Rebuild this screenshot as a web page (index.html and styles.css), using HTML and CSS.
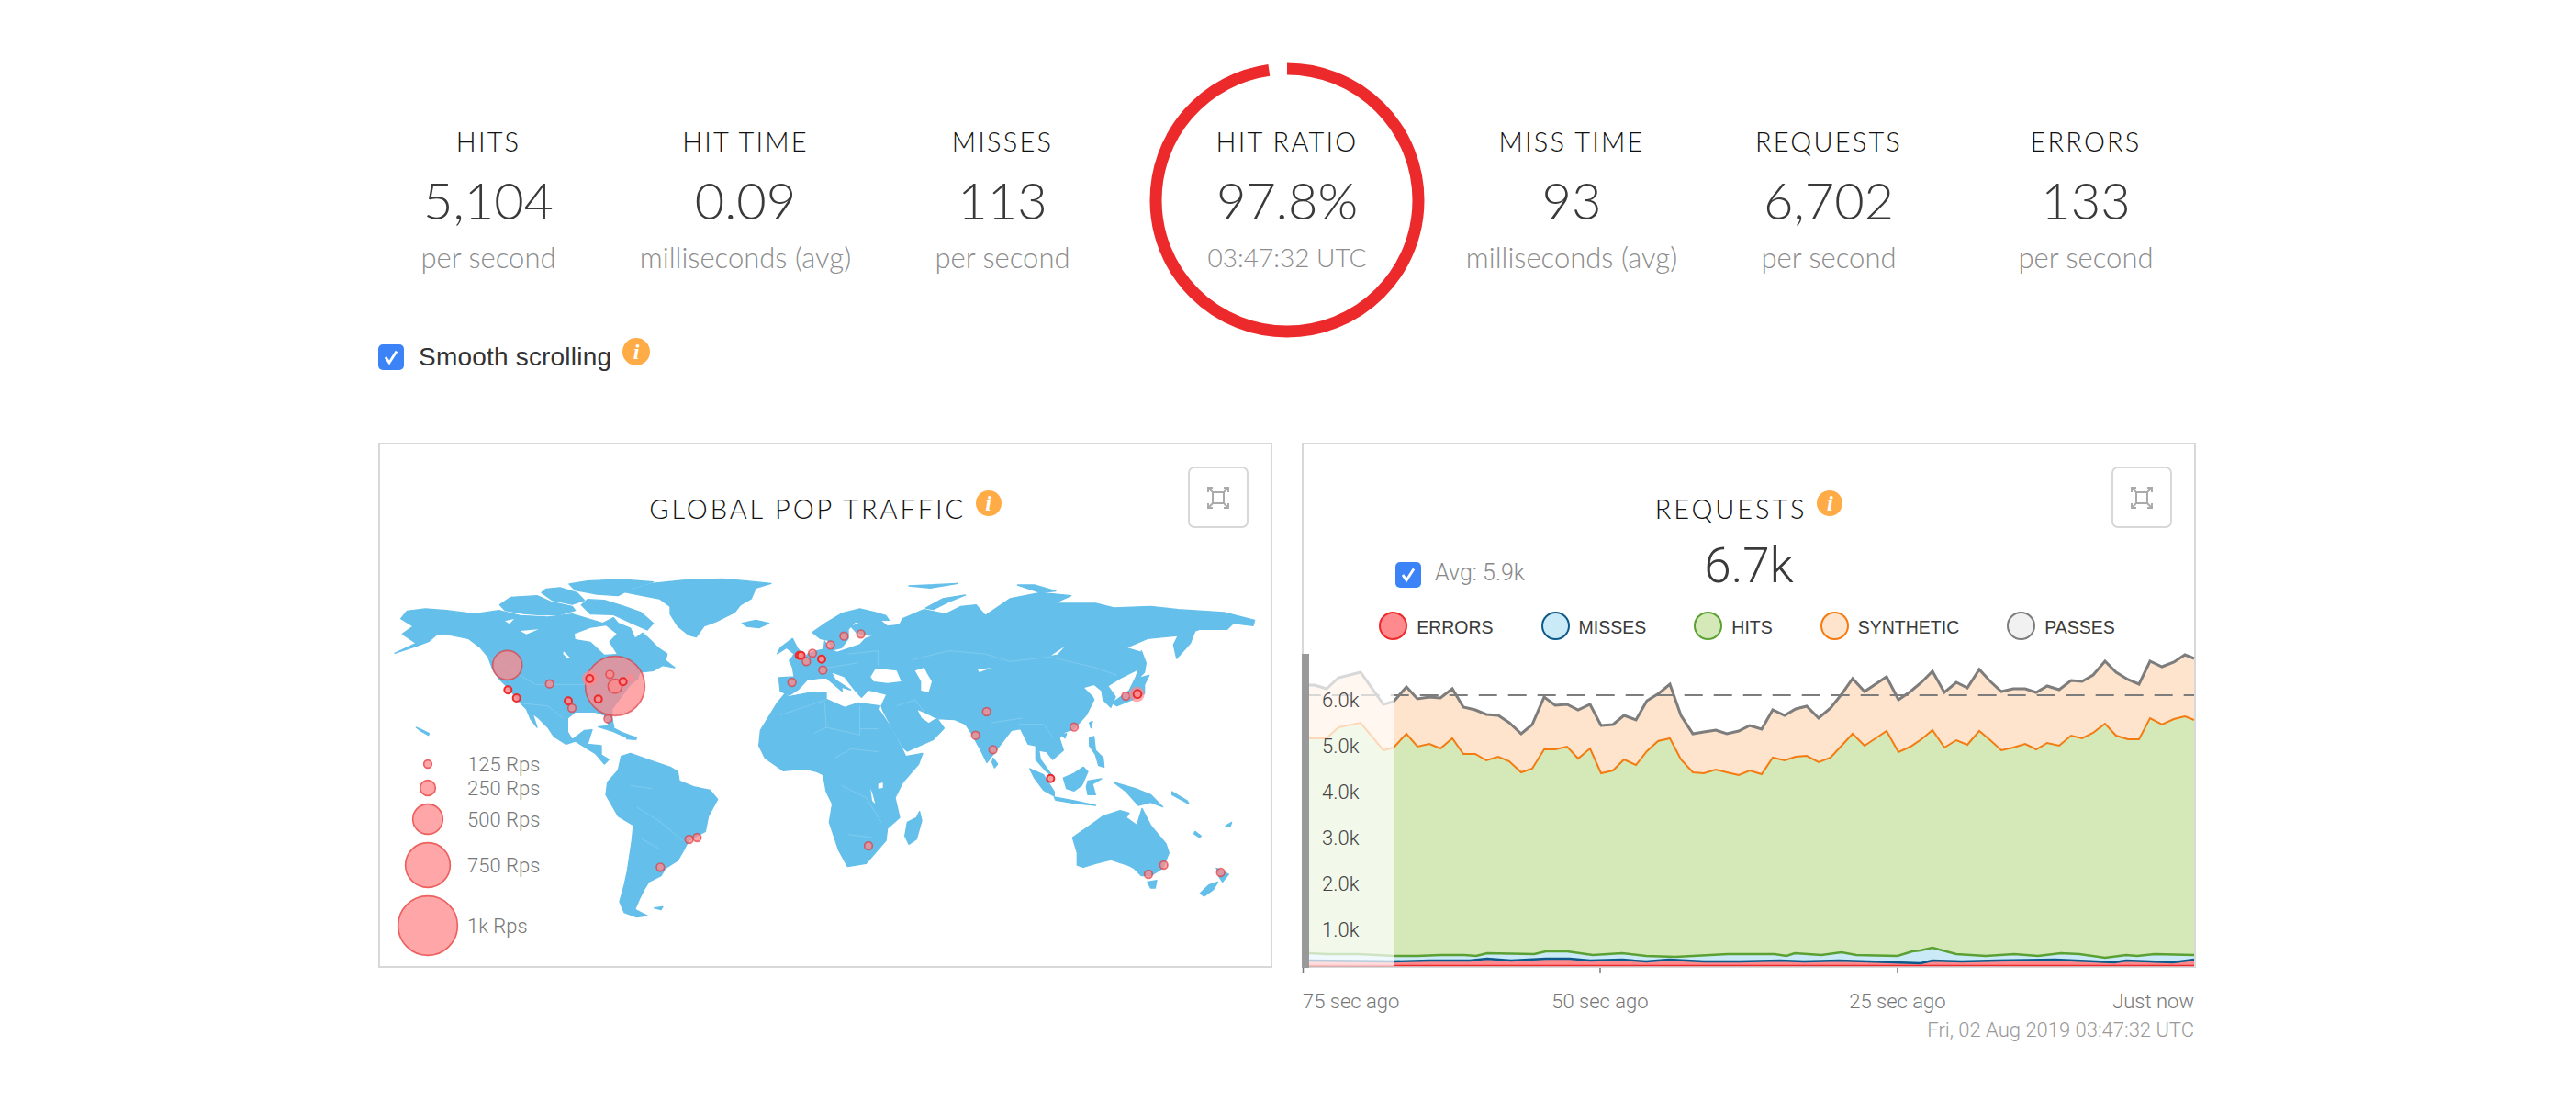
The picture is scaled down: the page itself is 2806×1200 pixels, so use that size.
FILE: index.html
```html
<!DOCTYPE html>
<html>
<head>
	<title>Real-time stats</title>
	<link rel="stylesheet" href="styles.css">
</head>
<body>
<div class="page">

	<!-- top numbers -->
	<div class="stats">
		<div class="stat">
			<div class="stat-label">HITS</div>
			<div class="stat-value">5,104</div>
			<div class="stat-sub">per second</div>
		</div>
		<div class="stat">
			<div class="stat-label">HIT TIME</div>
			<div class="stat-value">0.09</div>
			<div class="stat-sub">milliseconds (avg)</div>
		</div>
		<div class="stat">
			<div class="stat-label">MISSES</div>
			<div class="stat-value">113</div>
			<div class="stat-sub">per second</div>
		</div>
		<div class="stat stat-ring">
			<svg class="ring" width="300" height="300" viewBox="0 0 300 300">
				<circle class="ring-arc" cx="150" cy="150" r="143" pathLength="100" stroke-dasharray="97.8 2.2" transform="rotate(-90 150 150)"></circle>
			</svg>
			<div class="stat-label">HIT RATIO</div>
			<div class="stat-value">97.8%</div>
			<div class="stat-sub">03:47:32 UTC</div>
		</div>
		<div class="stat">
			<div class="stat-label">MISS TIME</div>
			<div class="stat-value">93</div>
			<div class="stat-sub">milliseconds (avg)</div>
		</div>
		<div class="stat">
			<div class="stat-label">REQUESTS</div>
			<div class="stat-value">6,702</div>
			<div class="stat-sub">per second</div>
		</div>
		<div class="stat">
			<div class="stat-label">ERRORS</div>
			<div class="stat-value">133</div>
			<div class="stat-sub">per second</div>
		</div>
	</div>

	<div class="smooth">
		<span class="check"><svg width="18" height="18" viewBox="0 0 18 18"><path d="M3 9 L7 15 L15 2.5" fill="none" stroke="#fff" stroke-width="2.8"/></svg></span>
		<span class="smooth-text">Smooth scrolling</span>
		<span class="info info-top">i</span>
	</div>

	<div class="cards">

		<!-- map card -->
		<div class="card">
			<div class="card-title">GLOBAL POP TRAFFIC <span class="info">i</span></div>
			<button class="expand">
				<svg width="24" height="24" viewBox="0 0 24 24" fill="none" stroke="#aaa" stroke-width="2">
					<rect x="6" y="6" width="12" height="12"/>
					<path d="M1 6V1H6M18 1H23V6M23 18V23H18M6 23H1V18M1 1L6 6M23 1L18 6M23 23L18 18M1 23L6 18"/>
				</svg>
			</button>
			<svg class="map" width="970" height="432" viewBox="12 420 2910 1296">
				<!-- north america -->
				<path class="land" d="M100 550L160 543L230 548L320 560L400 548L470 565L560 570L640 560L700 578L740 590L775 572L790 590L830 606L845 640L870 622L890 640L920 670L950 690L945 712L975 735L935 728L905 745L860 750L855 770L830 790L800 830L770 870L770 900L776 930L760 925L745 890L715 880L690 880L650 880L625 900L625 945L640 970L680 940L705 938L690 985L735 990L735 1020L760 1035L745 1050L715 1015L690 1000L650 975L620 985L580 960L560 930L530 900L510 885L525 930L505 905L490 870L470 850L430 800L400 770L380 740L365 700L340 670L300 640L240 628L200 625L170 650L130 665L60 688L130 655L85 625L120 600L80 575Z"/>
				<path class="land" d="M403 530L440 505L525 500L570 520L640 535L650 548L600 562L540 563L480 558L420 548Z"/>
				<path class="land" d="M670 530L690 512L745 515L810 535L865 555L905 590L885 612L835 590L775 562L700 560Z"/>
				<path class="land" d="M555 478L600 474L655 490L680 515L640 528L575 515L540 490Z"/>
				<path class="land" d="M630 462L690 452L800 447L905 455L830 478L790 500L720 495L650 482Z"/>
				<path class="land" d="M810 488L900 460L1000 450L1130 445L1210 452L1290 460L1240 475L1225 510L1190 530L1170 555L1110 585L1070 600L1045 635L1020 628L985 600L960 560L960 535L925 510L870 500Z"/>
				<path class="land" d="M1195 590L1240 580L1283 590L1250 605L1210 600Z"/>
				<path class="sea" d="M648 625L700 605L750 598L785 625L760 650L785 690L745 692L700 650L650 642Z"/>
				<path class="sea" d="M612 682L632 702L625 706L610 690Z"/>
				<path class="sea" d="M470 615L530 610L490 626Z"/>
				<path class="sea" d="M420 583L450 576L435 592Z"/>
				<path class="land" d="M725 928L760 925L800 945L850 965L810 960L770 942Z"/>
				<path class="land" d="M815 958L850 962L848 970L818 968Z"/>
				<path class="land" d="M130 930L145 936L172 950L170 956L145 942Z"/>

				<!-- south america -->
				<path class="land" d="M755 1110L790 1070L800 1025L830 1015L900 1040L960 1060L985 1075L990 1105L1040 1125L1090 1135L1115 1165L1085 1220L1075 1270L1020 1300L1005 1330L985 1365L945 1390L930 1415L890 1435L875 1460L860 1490L845 1525L885 1545L850 1550L810 1535L795 1500L810 1445L820 1400L835 1300L840 1250L790 1220L750 1150Z"/>
				<path class="land" d="M908 1520L936 1516L930 1526Z"/>

				<!-- eurasia -->
				<path class="land" d="M1320 812L1315 768L1365 765L1360 735L1350 710L1395 712L1410 690L1440 680L1462 675L1465 648L1477 672L1505 685L1550 670L1580 660L1598 640L1625 632L1570 622L1552 602L1582 587L1565 585L1542 610L1542 640L1520 670L1492 677L1475 645L1450 640L1425 620L1470 588L1520 558L1580 543L1630 555L1665 565L1675 580L1645 580L1670 600L1710 595L1720 575L1790 545L1860 560L1910 535L1960 530L1990 565L2070 510L2170 490L2270 500L2215 525L2350 525L2410 540L2530 535L2620 545L2770 555L2870 580L2865 598L2800 590L2780 610L2690 610L2675 615L2660 655L2615 705L2605 660L2620 630L2520 640L2450 670L2500 685L2490 740L2430 770L2390 795L2415 830L2400 865L2375 840L2370 810L2345 790L2310 800L2340 830L2345 840L2320 890L2280 935L2250 945L2232 965L2245 1005L2210 1035L2190 1010L2165 1005L2170 1035L2210 1090L2185 1070L2155 1035L2155 990L2130 985L2105 935L2075 940L2025 1005L1995 1045L1975 1005L1945 950L1925 920L1890 905L1835 902L1800 885L1765 870L1780 900L1805 918L1825 905L1835 905L1855 933L1820 970L1735 1008L1720 995L1690 940L1655 875L1650 860L1668 822L1608 808L1585 832L1565 810L1530 765L1485 748L1500 775L1550 808L1520 798L1522 812L1470 768L1445 770L1408 775L1380 805L1350 825Z"/>
				<path class="land" d="M1360 640L1375 670L1400 700L1350 715L1365 690L1340 670L1310 690L1320 670Z"/>
				<path class="land" d="M2500 680L2515 720L2510 750L2490 770L2525 760L2510 790L2510 820L2470 840L2420 860L2405 850L2460 810L2480 770L2495 730Z"/>
				<path class="land" d="M1740 468L1900 460L1810 475Z"/>
				<path class="land" d="M2095 465L2150 465L2220 485L2170 490Z"/>
				<path class="land" d="M1795 540L1850 510L1925 498L1870 520L1820 545Z"/>
				<path class="sea" d="M1615 765L1630 740L1660 740L1700 745L1715 780L1670 785L1625 780Z"/>
				<path class="sea" d="M1760 745L1790 735L1800 755L1815 780L1805 815L1780 810L1780 780Z"/>
				<path class="sea" d="M1965 740L2010 736L1970 750Z"/>
				<path class="sea" d="M2205 695L2250 665L2225 692Z"/>

				<!-- africa -->
				<path class="land" d="M1335 820L1348 830L1410 818L1470 815L1470 838L1530 865L1575 850L1645 860L1642 872L1680 928L1722 1008L1730 1025L1785 1015L1772 1050L1720 1110L1695 1160L1710 1225L1670 1260L1665 1300L1600 1375L1540 1385L1510 1330L1480 1240L1490 1180L1470 1140L1460 1085L1440 1075L1400 1065L1330 1072L1270 1030L1250 990L1255 940L1310 850Z"/>
				<path class="land" d="M1775 1205L1782 1235L1765 1295L1740 1312L1727 1285L1735 1240L1765 1225Z"/>
				<path class="sea" d="M1615 1130L1622 1150L1630 1180L1620 1170Z"/>
				<path class="sea" d="M1640 1115L1655 1110L1655 1128L1640 1130Z"/>

				<!-- asia pacific and australia -->
				<path class="land" d="M2240 955L2255 950L2250 965Z"/>
				<path class="land" d="M2330 915L2340 910L2335 932Z"/>
				<path class="land" d="M2015 1030L2030 1050L2020 1062L2012 1045Z"/>
				<path class="land" d="M2135 1065L2180 1085L2215 1140L2215 1155L2180 1135L2150 1095Z"/>
				<path class="land" d="M2215 1158L2280 1170L2350 1185L2280 1178L2220 1168Z"/>
				<path class="land" d="M2245 1095L2280 1080L2310 1060L2325 1075L2305 1120L2280 1138L2255 1130Z"/>
				<path class="land" d="M2325 1105L2370 1098L2340 1115L2350 1150L2325 1150L2320 1125Z"/>
				<path class="land" d="M2330 965L2345 960L2350 1005L2375 1030L2378 1060L2360 1055L2350 1020L2330 990Z"/>
				<path class="land" d="M2410 1110L2480 1130L2530 1150L2570 1190L2530 1175L2490 1185L2450 1140Z"/>
				<path class="land" d="M2275 1290L2340 1245L2375 1220L2430 1202L2460 1210L2450 1225L2485 1250L2502 1195L2530 1250L2580 1310L2590 1340L2570 1390L2530 1415L2500 1415L2475 1390L2455 1380L2400 1362L2350 1375L2310 1387L2290 1380L2290 1340Z"/>
				<path class="land" d="M2520 1435L2550 1430L2545 1455L2530 1455Z"/>
				<path class="land" d="M2745 1390L2785 1410L2765 1435L2755 1420Z"/>
				<path class="land" d="M2750 1435L2735 1460L2705 1482L2692 1472L2720 1445Z"/>
				<path class="land" d="M2675 1270L2695 1285L2690 1290L2672 1278Z"/>
				<path class="land" d="M2775 1252L2795 1240L2790 1255Z"/>
				<path class="land" d="M2600 1140L2650 1170L2655 1180L2600 1150Z"/>

				<!-- a few borders -->
				<path class="border" d="M365 700L520 790L700 790M460 850L560 860L610 900M850 1190L930 1240L1000 1300M830 1120L900 1130M860 1290L930 1330M1320 890L1470 840M1465 850L1470 930L1580 955L1580 860M1580 935L1640 935M1430 950L1470 930M1640 1010L1550 1000L1500 1030M1520 1120L1600 1160L1650 1240M1540 1280L1620 1290M1750 710L1870 680L1990 690L2070 715L2200 700L2350 735L2420 760M1540 690L1640 680L1640 730M1445 740L1570 720M1700 860L1760 840L1790 880M2010 915L2110 900M2100 920L2180 920L2210 960"/>

				<!-- pops -->
				<circle class="pop" cx="428" cy="727" r="48"/>
				<circle class="pop" cx="780" cy="795" r="97"/>
				<circle class="pop-faint" cx="697" cy="771" r="25"/>
				<circle class="pop-hot" cx="697" cy="771" r="12"/>
				<circle class="pop" cx="763" cy="757" r="13"/>
				<circle class="pop" cx="780" cy="796" r="23"/>
				<circle class="pop-hot" cx="806" cy="781" r="12"/>
				<circle class="pop-faint" cx="830" cy="768" r="13"/>
				<circle class="pop-hot" cx="725" cy="838" r="12"/>
				<circle class="pop" cx="566" cy="788" r="13"/>
				<circle class="pop-hot" cx="430" cy="808" r="12"/>
				<circle class="pop-hot" cx="458" cy="834" r="12"/>
				<circle class="pop-hot" cx="627" cy="844" r="12"/>
				<circle class="pop" cx="639" cy="867" r="13"/>
				<circle class="pop" cx="757" cy="902" r="13"/>
				<circle class="pop" cx="1358" cy="783" r="13"/>
				<circle class="pop-hot" cx="1382" cy="695" r="12"/>
				<circle class="pop-hot" cx="1388" cy="695" r="12"/>
				<circle class="pop" cx="1405" cy="715" r="13"/>
				<circle class="pop" cx="1425" cy="688" r="13"/>
				<circle class="pop-hot" cx="1455" cy="707" r="12"/>
				<circle class="pop" cx="1459" cy="743" r="13"/>
				<circle class="pop" cx="1484" cy="661" r="13"/>
				<circle class="pop" cx="1528" cy="632" r="13"/>
				<circle class="pop" cx="1583" cy="625" r="13"/>
				<circle class="pop" cx="1994" cy="879" r="13"/>
				<circle class="pop" cx="2449" cy="828" r="13"/>
				<circle class="pop-faint" cx="2485" cy="822" r="25"/>
				<circle class="pop-hot" cx="2487" cy="821" r="13"/>
				<circle class="pop" cx="1958" cy="956" r="13"/>
				<circle class="pop" cx="2015" cy="1003" r="13"/>
				<circle class="pop-hot" cx="2203" cy="1097" r="12"/>
				<circle class="pop" cx="2280" cy="929" r="13"/>
				<circle class="pop" cx="1608" cy="1317" r="13"/>
				<circle class="pop" cx="2523" cy="1410" r="13"/>
				<circle class="pop" cx="2573" cy="1380" r="13"/>
				<circle class="pop" cx="2759" cy="1404" r="13"/>
				<circle class="pop" cx="1022" cy="1296" r="13"/>
				<circle class="pop" cx="1048" cy="1290" r="13"/>
				<circle class="pop" cx="928" cy="1387" r="13"/>

				<!-- legend -->
				<circle class="key" cx="168" cy="1050" r="13"/>
				<circle class="key" cx="168" cy="1128" r="25"/>
				<circle class="key" cx="168" cy="1230" r="49"/>
				<circle class="key" cx="168" cy="1380" r="73"/>
				<circle class="key" cx="168" cy="1578" r="97"/>
				<text class="key-text" x="297" y="1073">125 Rps</text>
				<text class="key-text" x="297" y="1152">250 Rps</text>
				<text class="key-text" x="297" y="1253">500 Rps</text>
				<text class="key-text" x="297" y="1403">750 Rps</text>
				<text class="key-text" x="297" y="1602">1k Rps</text>
			</svg>
		</div>

		<!-- requests card, its time axis sits under it -->
		<div class="panel">
			<div class="card">
				<div class="card-title">REQUESTS <span class="info">i</span></div>
				<button class="expand">
					<svg width="24" height="24" viewBox="0 0 24 24" fill="none" stroke="#aaa" stroke-width="2">
						<rect x="6" y="6" width="12" height="12"/>
						<path d="M1 6V1H6M18 1H23V6M23 18V23H18M6 23H1V18M1 1L6 6M23 1L18 6M23 23L18 18M1 23L6 18"/>
					</svg>
				</button>
				<div class="summary">
					<div class="avg">
						<span class="check"><svg width="18" height="18" viewBox="0 0 18 18"><path d="M3 9 L7 15 L15 2.5" fill="none" stroke="#fff" stroke-width="2.8"/></svg></span>
						<span class="avg-text">Avg: 5.9k</span>
					</div>
					<div class="current">6.7k</div>
				</div>
				<div class="legend">
					<div class="legend-item"><span class="dot dot-errors"></span><span class="legend-text">ERRORS</span></div>
					<div class="legend-item"><span class="dot dot-misses"></span><span class="legend-text">MISSES</span></div>
					<div class="legend-item"><span class="dot dot-hits"></span><span class="legend-text">HITS</span></div>
					<div class="legend-item"><span class="dot dot-synthetic"></span><span class="legend-text">SYNTHETIC</span></div>
					<div class="legend-item"><span class="dot dot-passes"></span><span class="legend-text">PASSES</span></div>
				</div>
				<svg class="chart" width="974" height="352" viewBox="1418 700 974 352">
					<!-- areas, top of the stack first -->
					<polygon class="area-synthetic" points="1426,744 1432,744 1445,748 1458,736 1482,730 1507,765 1518,762 1532,746 1544,759 1557,757 1569,758 1582,748 1594,768 1607,771 1619,776 1632,777 1644,785 1657,797 1669,787 1682,757 1694,766 1707,765 1719,771 1732,765 1744,788 1757,787 1769,777 1782,782 1794,761 1807,753 1819,743 1831,777 1844,797 1856,795 1869,793 1881,797 1894,794 1906,788 1919,792 1931,771 1944,777 1956,770 1968,767 1981,780 1994,769 2006,754 2018,737 2031,751 2043,743 2055,735 2068,760 2081,751 2093,741 2105,729 2118,752 2131,741 2143,747 2156,727 2168,740 2180,751 2193,748 2206,748 2218,752 2230,745 2243,749 2256,739 2268,740 2280,733 2293,718 2305,730 2318,738 2330,743 2342,718 2355,724 2368,719 2380,711 2390,715 2390,1050 1426,1050"/>
					<polygon class="area-hits" points="1426,802 1445,802 1458,790 1482,785 1507,815 1518,812 1532,797 1544,811 1557,808 1569,813 1582,802 1594,819 1607,819 1619,826 1632,822 1644,827 1657,839 1669,835 1682,814 1694,814 1707,811 1719,824 1732,813 1744,840 1757,837 1769,825 1782,831 1794,816 1806,805 1819,802 1831,825 1844,839 1856,840 1869,836 1881,839 1894,842 1906,837 1919,841 1931,823 1944,826 1956,822 1968,821 1981,828 1994,823 2006,810 2018,797 2031,810 2043,802 2055,794 2068,817 2081,811 2093,803 2105,793 2118,812 2131,804 2143,809 2156,794 2168,804 2180,815 2193,812 2206,808 2218,814 2230,807 2243,810 2256,799 2268,802 2280,796 2293,786 2305,799 2318,803 2330,803 2342,780 2355,787 2368,781 2380,778 2390,782 2390,1050 1426,1050"/>
					<polygon class="area-misses" points="1426,1036 1445,1037 1480,1037 1500,1038 1518,1039 1544,1039 1569,1038 1595,1038 1608,1039 1620,1036 1671,1037 1684,1034 1707,1034 1735,1038 1767,1036 1793,1039 1825,1040 1882,1037 1933,1037 1946,1039 1955,1036 1984,1038 2006,1035 2022,1038 2067,1039 2083,1034 2092,1033 2105,1030 2131,1037 2163,1039 2194,1037 2220,1039 2245,1036 2265,1037 2293,1041 2316,1038 2328,1039 2347,1037 2390,1038 2390,1050 1426,1050"/>
					<polygon class="area-errors" points="1426,1044 1518,1045 1557,1044 1601,1044 1620,1042 1646,1044 1684,1042 1710,1042 1732,1044 1767,1043 1793,1045 1818,1043 1856,1045 1895,1045 1939,1044 1965,1045 2003,1044 2035,1045 2092,1047 2105,1044 2137,1045 2175,1044 2239,1043 2303,1046 2316,1044 2367,1046 2390,1043 2390,1050 1426,1050"/>

					<line class="avg-line" x1="1418.7" y1="755" x2="2390" y2="755"/>

					<polyline class="line-passes" points="1426,744 1432,744 1445,748 1458,736 1482,730 1507,765 1518,762 1532,746 1544,759 1557,757 1569,758 1582,748 1594,768 1607,771 1619,776 1632,777 1644,785 1657,797 1669,787 1682,757 1694,766 1707,765 1719,771 1732,765 1744,788 1757,787 1769,777 1782,782 1794,761 1807,753 1819,743 1831,777 1844,797 1856,795 1869,793 1881,797 1894,794 1906,788 1919,792 1931,771 1944,777 1956,770 1968,767 1981,780 1994,769 2006,754 2018,737 2031,751 2043,743 2055,735 2068,760 2081,751 2093,741 2105,729 2118,752 2131,741 2143,747 2156,727 2168,740 2180,751 2193,748 2206,748 2218,752 2230,745 2243,749 2256,739 2268,740 2280,733 2293,718 2305,730 2318,738 2330,743 2342,718 2355,724 2368,719 2380,711 2390,715"/>
					<polyline class="line-synthetic" points="1426,802 1445,802 1458,790 1482,785 1507,815 1518,812 1532,797 1544,811 1557,808 1569,813 1582,802 1594,819 1607,819 1619,826 1632,822 1644,827 1657,839 1669,835 1682,814 1694,814 1707,811 1719,824 1732,813 1744,840 1757,837 1769,825 1782,831 1794,816 1806,805 1819,802 1831,825 1844,839 1856,840 1869,836 1881,839 1894,842 1906,837 1919,841 1931,823 1944,826 1956,822 1968,821 1981,828 1994,823 2006,810 2018,797 2031,810 2043,802 2055,794 2068,817 2081,811 2093,803 2105,793 2118,812 2131,804 2143,809 2156,794 2168,804 2180,815 2193,812 2206,808 2218,814 2230,807 2243,810 2256,799 2268,802 2280,796 2293,786 2305,799 2318,803 2330,803 2342,780 2355,787 2368,781 2380,778 2390,782"/>
					<polyline class="line-hits" points="1426,1036 1445,1037 1480,1037 1500,1038 1518,1039 1544,1039 1569,1038 1595,1038 1608,1039 1620,1036 1671,1037 1684,1034 1707,1034 1735,1038 1767,1036 1793,1039 1825,1040 1882,1037 1933,1037 1946,1039 1955,1036 1984,1038 2006,1035 2022,1038 2067,1039 2083,1034 2092,1033 2105,1030 2131,1037 2163,1039 2194,1037 2220,1039 2245,1036 2265,1037 2293,1041 2316,1038 2328,1039 2347,1037 2390,1038"/>
					<polyline class="line-misses" points="1426,1044 1518,1045 1557,1044 1601,1044 1620,1042 1646,1044 1684,1042 1710,1042 1732,1044 1767,1043 1793,1045 1818,1043 1856,1045 1895,1045 1939,1044 1965,1045 2003,1044 2035,1045 2092,1047 2105,1044 2137,1045 2175,1044 2239,1043 2303,1046 2316,1044 2367,1046 2390,1043"/>
					<line class="line-errors" x1="1426" y1="1049.5" x2="2390" y2="1049.5"/>

					<!-- older data fades out -->
					<rect class="fade" x="1426" y="700" width="92.5" height="350"/>
					<rect class="chart-edge" x="1418" y="710" width="8" height="342"/>

					<text class="tick-y" x="1440" y="768">6.0k</text>
					<text class="tick-y" x="1440" y="818">5.0k</text>
					<text class="tick-y" x="1440" y="868">4.0k</text>
					<text class="tick-y" x="1440" y="918">3.0k</text>
					<text class="tick-y" x="1440" y="968">2.0k</text>
					<text class="tick-y" x="1440" y="1018">1.0k</text>
				</svg>
			</div>
			<svg class="axis" width="974" height="90" viewBox="1418 1054 974 90">
				<line class="tick" x1="1419.5" y1="1054" x2="1419.5" y2="1060"/>
				<line class="tick" x1="1743" y1="1054" x2="1743" y2="1060"/>
				<line class="tick" x1="2067" y1="1054" x2="2067" y2="1060"/>
				<text class="tick-x" x="1419" y="1098">75 sec ago</text>
				<text class="tick-x" x="1743" y="1098" text-anchor="middle">50 sec ago</text>
				<text class="tick-x" x="2067" y="1098" text-anchor="middle">25 sec ago</text>
				<text class="tick-x" x="2390" y="1098" text-anchor="end">Just now</text>
				<text class="chart-date" x="2390" y="1129" text-anchor="end">Fri, 02 Aug 2019 03:47:32 UTC</text>
			</svg>
		</div>

	</div>
</div>
</body>
</html>
```

FILE: styles.css
```css
body {
    margin: 0;
    background-color: #FFFFFF;
    font-family: "Liberation Sans", Arial, sans-serif;
    color: #333333;
}
.page {
    width: 1980px;
    margin-left: 412px;
    padding-top: 68px;
}
.stats {
    display: flex;
    width: 2020px;
    margin: 0 -20px;
    height: 300px;
}
.stat {
    width: 280px;
    padding-top: 68px;
    text-align: center;
}
.stat-ring {
    position: relative;
    width: 340px;
}
.stat-ring .stat-sub {
    font-size: 28px;
}
.ring {
    position: absolute;
    top: 0;
    left: 20px;
}
.ring-arc {
    fill: none;
    stroke: #EC2A2C;
    stroke-width: 13;
}
.stat-label {
    font-family: Lato, sans-serif;
    font-weight: 300;
    font-size: 29px;
    line-height: 36px;
    letter-spacing: 2.2px;
    color: #111111;
}
.stat-value {
    font-family: Lato, sans-serif;
    font-weight: 300;
    font-size: 56px;
    line-height: 60px;
    margin-top: 16px;
    color: #3A3A3A;
}
.stat-sub {
    font-family: Lato, sans-serif;
    font-weight: 300;
    font-size: 31px;
    line-height: 40px;
    margin-top: 12px;
    color: #8C8C8C;
}
.smooth {
    display: flex;
    align-items: center;
    height: 34px;
    margin-top: 4px;
}
.check {
    display: flex;
    align-items: center;
    justify-content: center;
    width: 28px;
    height: 28px;
    border-radius: 5px;
    background-color: #3C83F7;
}
.smooth-text {
    margin-left: 16px;
    font-size: 28px;
    letter-spacing: 0.2px;
}
.info {
    display: inline-block;
    width: 28px;
    height: 28px;
    border-radius: 50%;
    background-color: #FFAC47;
    color: #FFFFFF;
    font-family: "Liberation Serif", serif;
    font-style: italic;
    font-weight: bold;
    font-size: 24px;
    line-height: 28px;
    text-align: center;
    letter-spacing: 0;
    vertical-align: 9px;
}
.info-top {
    width: 30px;
    height: 30px;
    line-height: 30px;
    margin-left: 12px;
    margin-top: -12px;
}
.cards {
    display: flex;
    align-items: flex-start;
    gap: 32px;
    margin-top: 76px;
}
.panel {
    width: 974px;
}
.card {
    position: relative;
    box-sizing: border-box;
    width: 974px;
    height: 572px;
    border: 2px solid #D8D8D8;
}
.card-title {
    padding-top: 50px;
    font-family: Lato, sans-serif;
    font-weight: 300;
    font-size: 29px;
    line-height: 36px;
    letter-spacing: 2.9px;
    text-align: center;
    color: #111111;
}
.expand {
    position: absolute;
    top: 24px;
    right: 24px;
    display: flex;
    align-items: center;
    justify-content: center;
    box-sizing: border-box;
    width: 66px;
    height: 67px;
    padding: 0;
    border: 2px solid #D8D8D8;
    border-radius: 7px;
    background-color: #FFFFFF;
}
.map {
    display: block;
    margin-top: 50px;
}
.land {
    fill: #64BFEA;
    stroke: #64BFEA;
    stroke-width: 4;
    stroke-linejoin: round;
}
.sea {
    fill: #FFFFFF;
}
.border {
    fill: none;
    stroke: #8CD0F0;
    stroke-width: 2;
}
.pop {
    fill: rgba(255, 137, 139, 0.75);
    stroke: rgba(222, 60, 65, 0.7);
    stroke-width: 5;
}
.pop-hot {
    fill: rgba(255, 137, 139, 0.85);
    stroke: #EC2A2C;
    stroke-width: 6;
}
.pop-faint {
    fill: rgba(255, 137, 139, 0.7);
    stroke: none;
}
.key {
    fill: #FFA7A8;
    stroke: #EE5F5F;
    stroke-width: 5;
}
.key-text {
    font-family: Roboto, sans-serif;
    font-weight: 300;
    font-size: 66px;
    fill: #777777;
}
.summary {
    display: grid;
    grid-template-columns: 1fr auto 1fr;
    align-items: center;
    height: 60px;
    margin-top: 14px;
}
.avg {
    display: flex;
    align-items: center;
    padding-left: 100px;
    margin-top: 20px;
}
.avg-text {
    margin-left: 15px;
    margin-top: -5px;
    font-family: Roboto, sans-serif;
    font-weight: 300;
    font-size: 25px;
    color: #888888;
}
.current {
    grid-column: 2;
    font-family: Roboto, sans-serif;
    font-weight: 300;
    font-size: 53px;
    line-height: 60px;
    color: #3A3A3A;
}
.legend {
    display: flex;
    justify-content: center;
    gap: 52px;
    margin-top: 20px;
    height: 31px;
    padding-right: 4px;
}
.legend-item {
    display: flex;
    align-items: center;
    gap: 10px;
}
.legend-text {
    margin-top: 3px;
    font-size: 19.5px;
    color: #3A3A3A;
}
.dot {
    box-sizing: border-box;
    width: 31px;
    height: 31px;
    border: 2px solid;
    border-radius: 50%;
}
.dot-errors {
    background-color: #FF8A8E;
    border-color: #EC2A2C;
}
.dot-misses {
    background-color: #CBEAF8;
    border-color: #0B5A8B;
}
.dot-hits {
    background-color: #D5E9B8;
    border-color: #5BA033;
}
.dot-synthetic {
    background-color: #FEE3CD;
    border-color: #F47B11;
}
.dot-passes {
    background-color: #F1F1F1;
    border-color: #7D7D7D;
}
.chart {
    display: block;
    margin: 5px 0 0 -2px;
}
.axis {
    display: block;
}
.area-synthetic {
    fill: #FEE3CD;
}
.area-hits {
    fill: #D5E9B8;
}
.area-misses {
    fill: #CBEAF8;
}
.area-errors {
    fill: #FF8A8E;
}
.avg-line {
    stroke: #7D7D7D;
    stroke-width: 2;
    stroke-dasharray: 20 12;
}
.line-passes {
    fill: none;
    stroke: #7D7D7D;
    stroke-width: 3;
}
.line-synthetic {
    fill: none;
    stroke: #F47B11;
    stroke-width: 2;
}
.line-hits {
    fill: none;
    stroke: #5BA033;
    stroke-width: 2.4;
}
.line-misses {
    fill: none;
    stroke: #0B5A8B;
    stroke-width: 2.4;
}
.line-errors {
    stroke: #EC2A2C;
    stroke-width: 1.5;
}
.fade {
    fill: #FFFFFF;
    opacity: 0.7;
}
.chart-edge {
    fill: #999999;
}
.tick-y {
    font-family: Roboto, sans-serif;
    font-weight: 300;
    font-size: 22px;
    fill: #444444;
}
.tick {
    stroke: #777777;
    stroke-width: 1.5;
}
.tick-x {
    font-family: Roboto, sans-serif;
    font-weight: 300;
    font-size: 22px;
    fill: #777777;
}
.chart-date {
    font-family: Roboto, sans-serif;
    font-weight: 300;
    font-size: 22px;
    fill: #999999;
}
```
